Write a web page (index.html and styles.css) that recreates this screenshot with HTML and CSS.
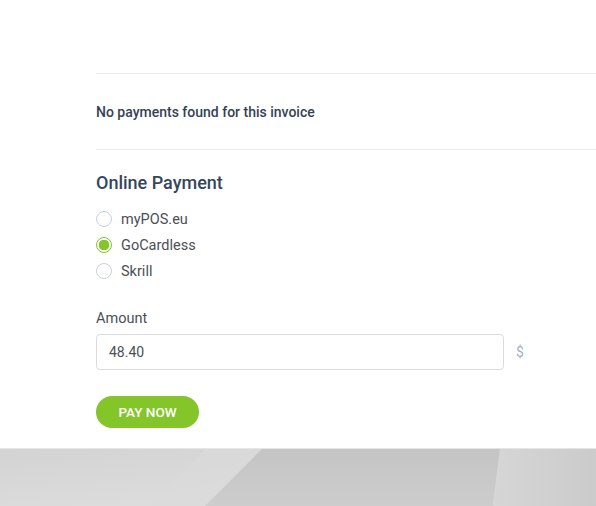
FILE: index.html
```html
<!DOCTYPE html>
<html lang="en">
  <head>
    <meta charset="UTF-8" />
    <meta name="viewport" content="width=device-width, initial-scale=1.0" />
    <title>Invoice payment</title>
    <link rel="stylesheet" href="styles.css">
  </head>
  <body>
    <div id="panel">
      <div class="payments">
        <p>No payments found for this invoice</p>
      </div>
      <form id="payForm">
        <h4>Online Payment</h4>
        <div class="modes">
          <label class="mode"><input type="radio" name="mode" /> <span>myPOS.eu</span></label>
          <label class="mode"><input type="radio" name="mode" checked /> <span>GoCardless</span></label>
          <label class="mode"><input type="radio" name="mode" /> <span>Skrill</span></label>
        </div>
        <label for="amount" class="amount-label">Amount</label>
        <div class="amount-row">
          <input id="amount" value="48.40" />
          <span class="currency">$</span>
        </div>
        <button type="submit" id="payNow">PAY NOW</button>
      </form>
    </div>
    <div id="backdrop">
      <svg viewBox="0 0 596 58" preserveAspectRatio="none">
        <defs>
          <linearGradient id="lite" x1="0" y1="0" x2="1" y2="1">
            <stop offset="0" stop-color="#d3d3d3" />
            <stop offset="1" stop-color="#e2e2e2" />
          </linearGradient>
          <linearGradient id="dark" x1="0" y1="0" x2="0" y2="1">
            <stop offset="0" stop-color="#c4c4c4" />
            <stop offset="1" stop-color="#cdcdcd" />
          </linearGradient>
          <linearGradient id="right" x1="0" y1="0" x2="1" y2="0">
            <stop offset="0" stop-color="#d6d6d6" />
            <stop offset="1" stop-color="#cbcbcb" />
          </linearGradient>
        </defs>
        <rect width="596" height="58" fill="url(#lite)" />
        <polygon points="205,0 262,0 205,58 150,58" fill="#dadada" opacity="0.6" />
        <polygon points="262,0 500,0 493,58 205,58" fill="url(#dark)" />
        <polygon points="500,0 596,0 596,58 493,58" fill="url(#right)" />
      </svg>
    </div>
  </body>
</html>
```
FILE: styles.css
```css
body {
  margin: 0;
  background-color: #d8d8d8;
  font-family: Roboto, "Liberation Sans", sans-serif;
}
#panel {
  background-color: #fff;
  height: 449px;
  padding-top: 73px;
  padding-left: 96px;
  box-sizing: border-box;
  border-bottom: 1px solid #e6e6e6;
}
.payments {
  border-top: 1px solid #eaeaea;
  border-bottom: 1px solid #eaeaea;
  height: 75px;
  display: flex;
  align-items: center;
}
.payments p {
  margin: 0;
  font-size: 14px;
  font-weight: 500;
  color: #354254;
}
form {
  display: flex;
  flex-direction: column;
  align-items: flex-start;
}
h4 {
  margin: 22px 0 0;
  font-size: 18px;
  font-weight: 500;
  line-height: 22px;
  color: #33465c;
}
.modes {
  display: flex;
  flex-direction: column;
  margin-top: 12px;
}
.mode {
  display: flex;
  align-items: center;
  height: 26px;
  font-size: 14.5px;
  color: #4a4f56;
}
.mode input {
  appearance: none;
  width: 16px;
  height: 16px;
  margin: 0 9px 0 0;
  border: 1px solid #c8d0da;
  border-radius: 50%;
  background-color: #fff;
  box-sizing: border-box;
}
.mode input:checked {
  border: 1px solid #84c529;
  background: radial-gradient(circle, #84c529 0, #84c529 5px, #fff 5.5px);
}
.amount-label {
  margin-top: 26px;
  font-size: 14.5px;
  color: #4a4f56;
  line-height: 18px;
}
.amount-row {
  display: flex;
  align-items: center;
  margin-top: 6px;
}
.amount-row input {
  width: 408px;
  height: 36px;
  box-sizing: border-box;
  border: 1px solid #dcdcdc;
  border-radius: 4px;
  padding: 0 12px;
  font-family: Roboto, "Liberation Sans", sans-serif;
  font-size: 14px;
  color: #4a4f56;
}
.currency {
  margin-left: 12px;
  font-size: 14px;
  color: #9fb0c4;
}
button {
  margin-top: 26px;
  width: 103px;
  height: 32px;
  border: none;
  border-radius: 16px;
  background-color: #84c529;
  color: #fff;
  font-family: Roboto, "Liberation Sans", sans-serif;
  font-size: 13.5px;
  font-weight: 500;
  cursor: pointer;
}
#backdrop svg {
  display: block;
  width: 100%;
  height: 57px;
}
```
